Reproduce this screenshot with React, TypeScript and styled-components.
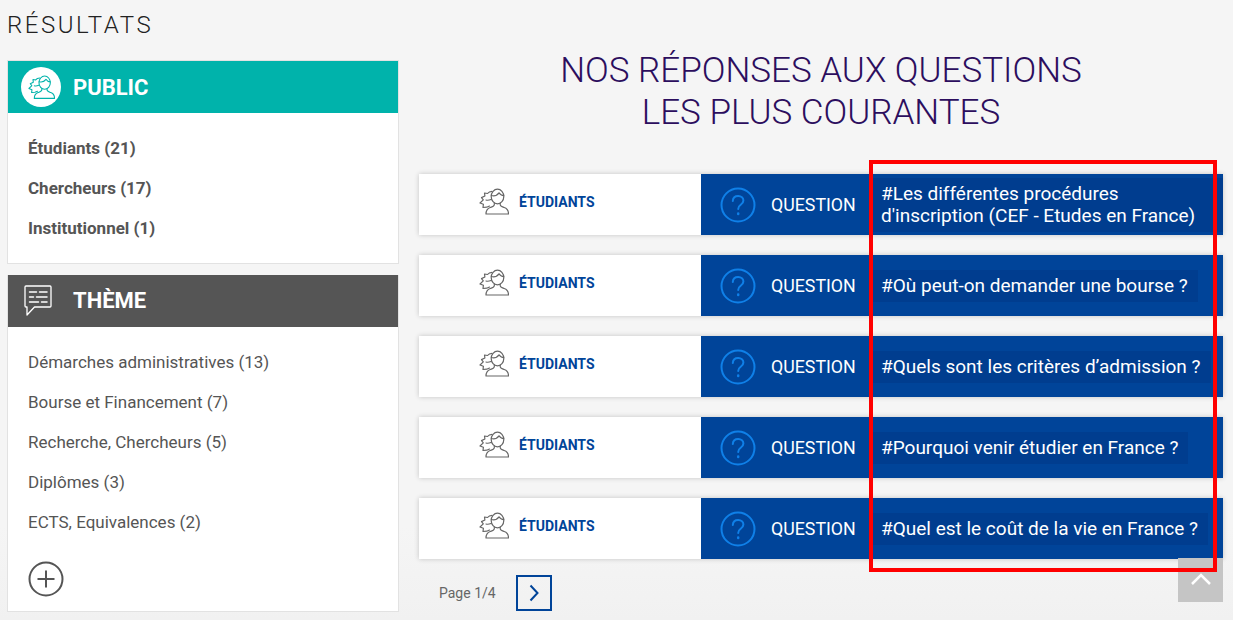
import React from 'react';
import styled, { createGlobalStyle } from 'styled-components';

const GlobalStyle = createGlobalStyle`
  html, body {
    margin: 0;
    padding: 0;
    height: 100%;
    overflow: hidden;
    background: #f5f5f5;
    font-family: Roboto, "Liberation Sans", sans-serif;
  }
`;

const Page = styled.div`
  position: relative;
  width: 1233px;
  height: 620px;
  overflow: hidden;
  padding: 12px 10px 0 7px;
  box-sizing: border-box;
  background: linear-gradient(#f5f5f5 85%, #f1f1f1);
`;

const PageTitle = styled.h1`
  margin: 0 0 22px 0;
  height: 26px;
  font-size: 24px;
  line-height: 26px;
  font-weight: 300;
  letter-spacing: 2.5px;
  color: #222;
`;

const Columns = styled.div`
  display: grid;
  grid-template-columns: 392px 804px;
  column-gap: 20px;
`;

const Sidebar = styled.aside`
  display: flex;
  flex-direction: column;
  gap: 11px;
`;

const Panel = styled.section`
  background: #fff;
  border: 1px solid #e2e2e2;
  border-top-width: ${p => (p.$flush ? 0 : 1)}px;
`;

const PanelHeader = styled.div`
  height: 52px;
  box-sizing: border-box;
  padding-bottom: ${p => p.$lift}px;
  display: flex;
  align-items: center;
  background: ${p => p.$color};
  color: #fff;
  font-size: 22px;
  font-weight: 700;
`;

const HeaderIcon = styled.div`
  width: 65px;
  padding-left: ${p => p.$inset}px;
  box-sizing: border-box;
  display: flex;
  align-items: center;
  flex-shrink: 0;
`;

const Badge = styled.div`
  width: 40px;
  height: 40px;
  border-radius: 50%;
  background: #fff;
  display: flex;
  align-items: center;
  justify-content: center;
`;

const FilterList = styled.ul`
  list-style: none;
  margin: 0;
  padding: ${p => p.$top}px 20px ${p => p.$bottom}px;
  display: flex;
  flex-direction: column;
  gap: 18px;
`;

const FilterItem = styled.li`
  font-size: 17px;
  line-height: 22px;
  font-weight: ${p => (p.$strong ? 700 : 400)};
  color: #555;
`;

const MoreButton = styled.div`
  margin: 28px 0 0 20px;
  height: 36px;
  padding-bottom: 14px;
`;

const Main = styled.main`
  display: flex;
  flex-direction: column;
`;

const Heading = styled.h2`
  margin: -10px 0 40px;
  text-align: center;
  font-size: 35px;
  line-height: 42px;
  font-weight: 300;
  color: #2c0e5e;
`;

const Rows = styled.div`
  display: flex;
  flex-direction: column;
  gap: 20px;
`;

const Row = styled.article`
  height: 61px;
  display: flex;
  box-shadow: 0 0 5px rgba(0, 0, 0, 0.2);
`;

const Audience = styled.div`
  width: 282px;
  background: #fff;
  display: flex;
  align-items: center;
  gap: 10px;
  padding: 0 0 6px 60px;
  box-sizing: border-box;
  color: #004499;
  font-size: 14px;
  font-weight: 700;
`;

const QuestionBar = styled.div`
  flex: 1;
  background: #004499;
  display: flex;
  align-items: center;
  color: #fff;
`;

const QuestionLabel = styled.div`
  width: 174px;
  padding-left: 19px;
  box-sizing: border-box;
  display: flex;
  align-items: center;
  gap: 15px;
  font-size: 17.8px;
  font-weight: 400;
  flex-shrink: 0;
`;

const QuestionText = styled.div`
  flex: 1;
  margin-left: -2px;
  font-size: 19px;
  line-height: 22px;
`;

const Highlight = styled.span`
  display: inline-block;
  box-sizing: border-box;
  background: #003d8f;
  padding: 5px 10px 5px 8px;
`;

const Pager = styled.nav`
  display: flex;
  align-items: center;
  gap: 20px;
  margin: 16px 0 0 20px;
  font-size: 14px;
  color: #666;
`;

const NextButton = styled.div`
  width: 36px;
  height: 36px;
  box-sizing: border-box;
  border: 2px solid #004499;
  display: flex;
  align-items: center;
  justify-content: center;
`;

const RedFrame = styled.div`
  position: absolute;
  left: 869px;
  top: 160px;
  width: 348px;
  height: 412px;
  box-sizing: border-box;
  border: 4px solid #f00;
  pointer-events: none;
  z-index: 3;
`;

const BackToTop = styled.div`
  position: absolute;
  left: 1178px;
  top: 558px;
  width: 45px;
  height: 44px;
  background: #c5c5c5;
  display: flex;
  justify-content: center;
  padding-top: 15px;
  box-sizing: border-box;
  z-index: 2;
`;

const PeopleIcon = ({ color, width }: { color: string; width: number }) => (
  <svg width={width} height={(width * 27) / 30} viewBox="0 0 30 27" fill="none" stroke={color} strokeWidth="1.2" strokeLinejoin="round" strokeLinecap="round">
    <ellipse cx="18.500" cy="8.500" rx="6.300" ry="7.300" />
    <path d="M12.300 7.500c3 .8 6-.4 7.700-2.700 1 1.800 2.800 2.800 4.800 2.800" />
    <path d="M15.300 15v1.800c0 1.400-2 2-4 2.700-3 1-4.300 2.500-4.300 6.500h22.500c0-4-1.300-5.500-4.300-6.500-2-.7-4-1.300-4-2.700V15" />
    <path d="M13 3.300c-2 .1-3.500.9-4.500 2.200L5.500 5l.4 3-3.400 1.600 1.800 2.300L1 15l3.400 1.300L4 19.500l3.700-.3 2.800-1.200" />
    <path d="M7 12c1.500.5 3 .3 5-.5" />
  </svg>
);

const ChatIcon = () => (
  <svg width="28" height="31" viewBox="0 0 28 31" fill="none" stroke="#fff" strokeWidth="1.300" strokeLinejoin="round" strokeLinecap="round">
    <path d="M2 1h24c.6 0 1 .4 1 1v19c0 .6-.4 1-1 1H10.500L3 30v-8H2c-.6 0-1-.4-1-1V2c0-.6.4-1 1-1z" />
    <path d="M5.500 7h7M15.500 7h7.500M5.500 12h4M12.500 12h10.500M5.500 17h9M17.500 17h5.500" strokeWidth="1.500" />
  </svg>
);

const HelpIcon = () => (
  <svg width="36" height="36" viewBox="0 0 36 36" fill="none" stroke="#0f80e8" strokeWidth="2" strokeLinecap="round">
    <circle cx="18" cy="18" r="16.500" />
    <path d="M12.800 14c.2-3 2.400-5 5.400-5 3 0 5.200 1.900 5.200 4.500 0 2-1 3.100-2.700 4.300-1.700 1.200-2.500 2.200-2.500 4.200" />
    <path d="M18.200 26.500v.5" strokeWidth="2.500" />
  </svg>
);

const publics = ['Étudiants (21)', 'Chercheurs (17)', 'Institutionnel (1)'];

const themes = [
  'Démarches administratives (13)',
  'Bourse et Financement (7)',
  'Recherche, Chercheurs (5)',
  'Diplômes (3)',
  'ECTS, Equivalences (2)',
];

const questions = [
  "#Les différentes procédures d'inscription (CEF - Etudes en France)",
  '#Où peut-on demander une bourse ?',
  '#Quels sont les critères d’admission ?',
  '#Pourquoi venir étudier en France ?',
  '#Quel est le coût de la vie en France ?',
];

const App = () => (
  <Page>
    <GlobalStyle />
    <PageTitle>RÉSULTATS</PageTitle>
    <Columns>
      <Sidebar>
        <Panel>
          <PanelHeader $color="#00b3ab" $lift={0}>
            <HeaderIcon $inset={13}>
              <Badge>
                <PeopleIcon color="#00b3ab" width={27} />
              </Badge>
            </HeaderIcon>
            PUBLIC
          </PanelHeader>
          <FilterList $top={24} $bottom={24}>
            {publics.map(item => (
              <FilterItem key={item} $strong>{item}</FilterItem>
            ))}
          </FilterList>
        </Panel>
        <Panel $flush>
          <PanelHeader $color="#555" $lift={1}>
            <HeaderIcon $inset={16}>
              <ChatIcon />
            </HeaderIcon>
            THÈME
          </PanelHeader>
          <FilterList $top={24} $bottom={0}>
            {themes.map(item => (
              <FilterItem key={item}>{item}</FilterItem>
            ))}
          </FilterList>
          <MoreButton>
            <svg width="36" height="36" viewBox="0 0 36 36" fill="none" stroke="#555" strokeWidth="2">
              <circle cx="18" cy="18" r="16.500" />
              <path d="M9.500 18h17M18 9.500v17" />
            </svg>
          </MoreButton>
        </Panel>
      </Sidebar>
      <Main>
        <Heading>NOS RÉPONSES AUX QUESTIONS<br />LES PLUS COURANTES</Heading>
        <Rows>
          {questions.map(question => (
            <Row key={question}>
              <Audience>
                <PeopleIcon color="#666" width={30} />
                ÉTUDIANTS
              </Audience>
              <QuestionBar>
                <QuestionLabel>
                  <HelpIcon />
                  QUESTION
                </QuestionLabel>
                <QuestionText>
                  <Highlight>{question}</Highlight>
                </QuestionText>
              </QuestionBar>
            </Row>
          ))}
        </Rows>
        <Pager>
          Page 1/4
          <NextButton>
            <svg width="12" height="18" viewBox="0 0 12 18" fill="none" stroke="#004499" strokeWidth="2">
              <path d="M2.500 1.500L9.500 9l-7 7.500" />
            </svg>
          </NextButton>
        </Pager>
      </Main>
    </Columns>
    <BackToTop>
      <svg width="20" height="12" viewBox="0 0 20 12" fill="none" stroke="#fff" strokeWidth="2.500">
        <path d="M1 11L10 2l9 9" />
      </svg>
    </BackToTop>
    <RedFrame />
  </Page>
);

export default App;
